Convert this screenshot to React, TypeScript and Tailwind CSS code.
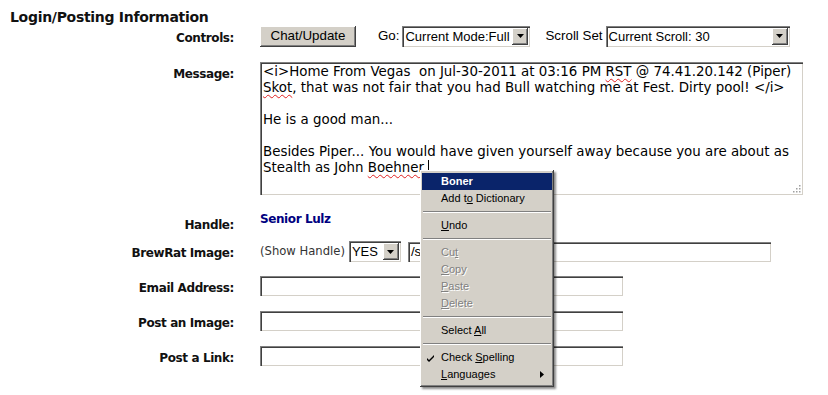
import React from 'react';

const sunken =
  'bg-white shadow-[inset_1px_1px_0_#808080,inset_2px_2px_0_#404040,inset_-1px_-1px_0_#d4d0c8]';
const raised =
  'bg-[#d4d0c8] shadow-[inset_-1px_-1px_0_#404040,inset_1px_1px_0_#ffffff,inset_-2px_-2px_0_#808080]';
const win = "font-['Liberation_Sans',Arial,sans-serif] text-[13.33px] text-black";
const label =
  "font-['DejaVu_Sans',Verdana,sans-serif] font-bold text-[12px] leading-[14px] tracking-[-0.4px] text-[#111]";

const DropArrow: React.FC = () => (
  <span className={`${raised} w-[16px] h-[17px] shrink-0 flex items-center justify-center`}>
    <svg width="7" height="4" viewBox="0 0 7 4">
      <path d="M0 0h7L3.5 4z" fill="#000" />
    </svg>
  </span>
);

const Select: React.FC<{ value: string; className: string }> = ({ value, className }) => (
  <div
    className={`${sunken} font-['Liberation_Sans',Arial,sans-serif] text-[13px] text-black flex items-center h-[21px] pl-[3px] pr-[2px] ${className}`}
  >
    <span className="flex-1 whitespace-nowrap leading-none">{value}</span>
    <DropArrow />
  </div>
);

const Row: React.FC<{ name: string; className?: string; labelClass?: string; children?: React.ReactNode }> = ({
  name,
  className = '',
  labelClass = '',
  children,
}) => (
  <div className={`flex gap-[26px] ${className}`}>
    <div className={`w-[234px] shrink-0 text-right ${label} ${labelClass}`}>{name}</div>
    {children}
  </div>
);

const Squiggle: React.FC<{ children: React.ReactNode }> = ({ children }) => (
  <span className="underline decoration-wavy decoration-[#e02020] decoration-1 underline-offset-2">{children}</span>
);

const MenuItem: React.FC<{ children: React.ReactNode; disabled?: boolean; active?: boolean; check?: boolean; sub?: boolean }> = ({
  children,
  disabled,
  active,
  check,
  sub,
}) => (
  <div
    className={`relative h-[17px] flex items-center pl-[19px] ${
      active ? 'bg-[#0a246a] text-white font-bold' : disabled ? 'text-[#808080] [text-shadow:1px_1px_0_#ffffff]' : 'text-black'
    }`}
  >
    {check && (
      <svg className="absolute left-[5px] top-[6px]" width="7" height="7" viewBox="0 0 7 7">
        <path d="M0 3l2 2 5-5v2l-5 5-2-2z" fill="#000" />
      </svg>
    )}
    <span className="whitespace-nowrap">{children}</span>
    {sub && (
      <svg className="absolute left-[118px] top-[5px]" width="4" height="7" viewBox="0 0 4 7">
        <path d="M0 0l4 3.5L0 7z" fill="#000" />
      </svg>
    )}
  </div>
);

const Sep: React.FC = () => (
  <div className="h-[10px] flex items-center px-[1px]">
    <div className="w-full h-[2px] border-t border-[#808080] border-b border-b-white" />
  </div>
);

const App: React.FC = () => {
  return (
    <div className="relative w-[828px] h-[395px] bg-white overflow-hidden">
      <div
        className={"pl-[10px] pt-[9px] h-[25px] font-['DejaVu_Sans',Verdana,sans-serif] font-bold text-[14px] leading-[16px] tracking-[-0.3px] text-[#111]"}
      >
        Login/Posting Information
      </div>

      <Row name="Controls:" className="h-[22px] items-center" labelClass="pt-[4px]">
        <div className="flex items-center">
          <button className={`${raised} ${win} w-[96px] h-[21px] leading-none`}>Chat/Update</button>
          <span className={`${win} ml-[22px] mr-[3px]`}>Go:</span>
          <Select value="Current Mode:Full" className="w-[128px]" />
          <span className={`${win} ml-[15px] mr-[3px]`}>Scroll Set</span>
          <Select value="Current Scroll: 30" className="w-[184px]" />
        </div>
      </Row>

      <Row name="Message:" className="mt-[15px] items-start" labelClass="pt-[5px]">
        <div
          className={`${sunken} relative w-[543px] h-[133px] pl-[3px] pt-[2px] font-['DejaVu_Sans',Verdana,sans-serif] text-[13.4px] leading-[16px] text-black whitespace-pre`}
        >
          <div>
            {'<i>Home From Vegas  on Jul-30-2011 at 03:16 PM '}
            <Squiggle>RST</Squiggle>
            {' @ 74.41.20.142 (Piper)'}
          </div>
          <div>
            <Squiggle>Skot</Squiggle>
            {', that was not fair that you had Bull watching me at Fest. Dirty pool! </i>'}
          </div>
          <div className="h-[16px]" />
          <div>He is a good man...</div>
          <div className="h-[16px]" />
          <div>Besides Piper... You would have given yourself away because you are about as</div>
          <div>
            {'Stealth as John '}
            <Squiggle>Boehner</Squiggle>
            {' '}
            <span className="inline-block w-[1px] h-[16px] bg-black align-[-4px]" />
          </div>
          <svg className="absolute right-[2px] bottom-[2px]" width="8" height="8" viewBox="0 0 8 8">
            <rect x="6" y="0" width="1.5" height="1.5" fill="#a0a0a0" />
            <rect x="3" y="3" width="1.5" height="1.5" fill="#a0a0a0" />
            <rect x="6" y="3" width="1.5" height="1.5" fill="#a0a0a0" />
            <rect x="0" y="6" width="1.5" height="1.5" fill="#a0a0a0" />
            <rect x="3" y="6" width="1.5" height="1.5" fill="#a0a0a0" />
            <rect x="6" y="6" width="1.5" height="1.5" fill="#a0a0a0" />
          </svg>
        </div>
      </Row>

      <Row name="Handle:" className="h-[30px] mt-[13px] items-start" labelClass="pt-[10px]">
        <div className={`${label} pt-[4px] !text-[#000080]`}>Senior Lulz</div>
      </Row>

      <Row name="BrewRat Image:" className="h-[21px] mt-[3px] items-center" labelClass="pt-[2px]">
        <div className="flex items-center">
          <span className={"font-['DejaVu_Sans',Verdana,sans-serif] text-[11.6px] text-[#333] mr-[4px]"}>
            (Show Handle)
          </span>
          <Select value="YES" className="w-[52px]" />
          <div className={`${sunken} ${win} w-[363px] h-[20px] ml-[7px] pl-[3px] flex items-center leading-none`}>
            /s
          </div>
        </div>
      </Row>

      <Row name="Email Address:" className="h-[20px] mt-[14px] items-center" labelClass="pt-[4px]">
        <div className={`${sunken} w-[363px] h-[20px]`} />
      </Row>
      <Row name="Post an Image:" className="h-[20px] mt-[15px] items-center" labelClass="pt-[4px]">
        <div className={`${sunken} w-[363px] h-[20px]`} />
      </Row>
      <Row name="Post a Link:" className="h-[20px] mt-[15px] items-center" labelClass="pt-[4px]">
        <div className={`${sunken} w-[363px] h-[20px]`} />
      </Row>

      {/* spell-check context menu */}
      <div
        className={`absolute left-[420px] top-[170px] w-[134px] pt-[3px] pb-[4px] px-[2px] bg-[#d4d0c8] shadow-[inset_-1px_-1px_0_#404040,inset_1px_1px_0_#ffffff,inset_-2px_-2px_0_#808080,2px_2px_2px_rgba(0,0,0,0.45)] font-['Liberation_Sans',Arial,sans-serif] text-[11px]`}
      >
        <MenuItem active>Boner</MenuItem>
        <MenuItem>
          Add t<u>o</u> Dictionary
        </MenuItem>
        <Sep />
        <MenuItem>
          <u>U</u>ndo
        </MenuItem>
        <Sep />
        <MenuItem disabled>
          Cu<u>t</u>
        </MenuItem>
        <MenuItem disabled>
          <u>C</u>opy
        </MenuItem>
        <MenuItem disabled>
          <u>P</u>aste
        </MenuItem>
        <MenuItem disabled>
          <u>D</u>elete
        </MenuItem>
        <Sep />
        <MenuItem>
          Select <u>A</u>ll
        </MenuItem>
        <Sep />
        <MenuItem check>
          Check <u>S</u>pelling
        </MenuItem>
        <MenuItem sub>
          <u>L</u>anguages
        </MenuItem>
      </div>
    </div>
  );
};

export default App;
